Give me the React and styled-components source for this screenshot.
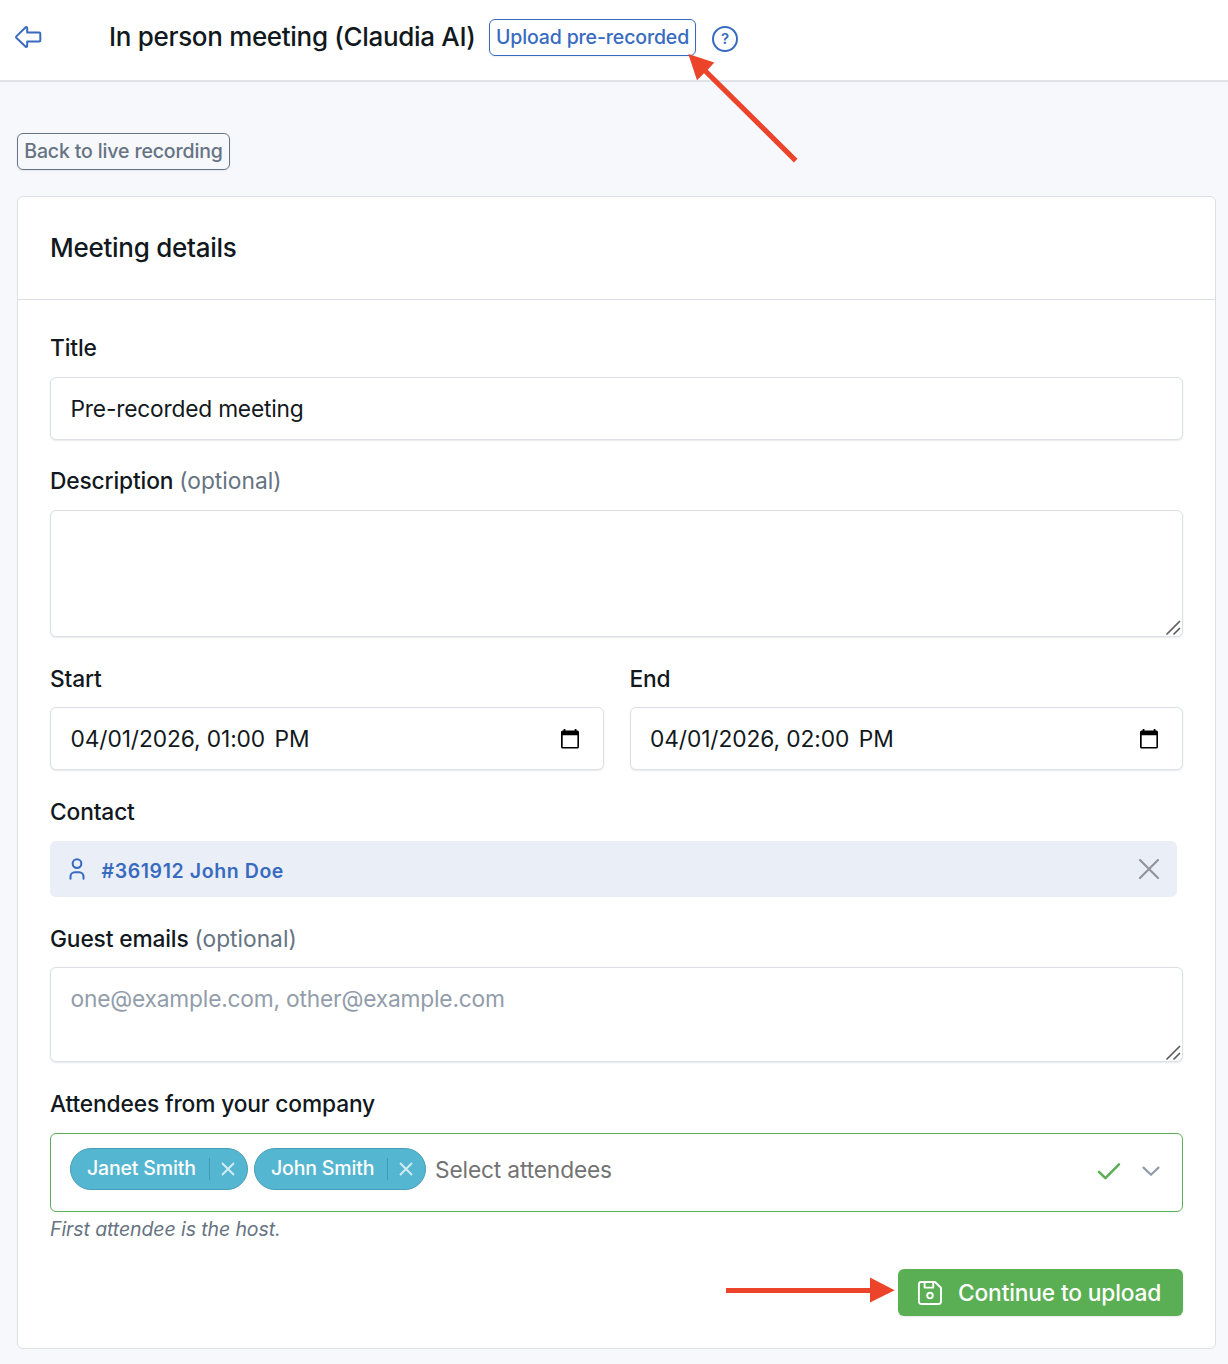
import React from 'react';
import styled, { createGlobalStyle } from 'styled-components';

const Icon = ({ size, stroke = 1.9, children }) => (
    <svg
        width={size}
        height={size}
        viewBox="0 0 24 24"
        fill="none"
        stroke="currentColor"
        strokeWidth={stroke}
        strokeLinecap="round"
        strokeLinejoin="round"
    >
        {children}
    </svg>
);

const ResizeGrip = () => (
    <Grip width="16" height="16" viewBox="0 0 16 16" stroke="#5c5c5c" strokeWidth="1.7" strokeLinecap="round">
        <path d="M2 15L14.500 2.500M9 15L14.500 9.500" />
    </Grip>
);

const CalendarIcon = () => (
    <svg width="18" height="20" viewBox="0 0 18 20" fill="#000">
        <path d="M16.4 1.6h-.9V0h-1.8v1.6H4.4V0H2.6v1.6h-.9C.7 1.6 0 2.4 0 3.4v14.4c0 1 .7 1.8 1.7 1.8h14.7c.9 0 1.6-.8 1.6-1.8V3.4c0-1-.7-1.8-1.6-1.8zm0 16.3H1.7V6.2h14.7z" />
    </svg>
);

const Field = ({ label, optional, gap, children }) => (
    <FieldBox>
        <Label $gap={gap}>
            {label} {optional && <Optional>(optional)</Optional>}
        </Label>
        {children}
    </FieldBox>
);

const DateField = ({ label, value, time }) => (
    <Field label={label} gap={12}>
        <Control $height={63}>
            <DateText>{value}</DateText>
            <DateText>{time}</DateText>
            <Spacer />
            <CalendarIcon />
        </Control>
    </Field>
);

const Attendee = ({ name, width }) => (
    <Tag $width={width}>
        <TagName>{name}</TagName>
        <TagRemove>
            <svg width="14" height="14" viewBox="0 0 14 14" stroke="currentColor" strokeWidth="1.9">
                <path d="M1 1l12 12M13 1L1 13" />
            </svg>
        </TagRemove>
    </Tag>
);

const App = () => {
    return (
        <Page>
            <GlobalStyle />
            <Header>
                <BackLink>
                    <svg width="28" height="24" viewBox="0 0 28 24" fill="none" stroke="currentColor" strokeWidth="2" strokeLinejoin="round" strokeLinecap="round">
                        <path d="M13.200 7.600h12.100a1 1 0 0 1 1 1v7a1 1 0 0 1-1 1H13.200v4.500a.9.9 0 0 1-1.500.6L2.300 12.800a1 1 0 0 1 0-1.400l9.400-9.100a.9.9 0 0 1 1.500.6z" />
                    </svg>
                </BackLink>
                <PageTitle>In person meeting (Claudia AI)</PageTitle>
                <SmallButton $color="#386bc0" $width={207}>Upload pre-recorded</SmallButton>
                <HelpIcon>?</HelpIcon>
            </Header>
            <Content>
                <SmallButton $color="#667382" $width={213}>Back to live recording</SmallButton>
                <Card>
                    <CardHeader>Meeting details</CardHeader>
                    <CardBody>
                        <Field label="Title">
                            <Control $height={63}>
                                <InputText>Pre-recorded meeting</InputText>
                            </Control>
                        </Field>
                        <Field label="Description" optional>
                            <Control $height={127}>
                                <ResizeGrip />
                            </Control>
                        </Field>
                        <DateRow>
                            <DateField label="Start" value="04/01/2026, 01:00" time="PM" />
                            <DateField label="End" value="04/01/2026, 02:00" time="PM" />
                        </DateRow>
                        <Field label="Contact">
                            <ContactBar>
                                <Icon size={26}>
                                    <circle cx="12" cy="7" r="4" />
                                    <path d="M6 21v-2a4 4 0 0 1 4-4h4a4 4 0 0 1 4 4v2" />
                                </Icon>
                                <ContactName>#361912 John Doe</ContactName>
                                <Spacer />
                                <ContactRemove>
                                    <svg width="20" height="20" viewBox="0 0 20 20" stroke="currentColor" strokeWidth="2.1" strokeLinecap="round">
                                        <path d="M1 1l18 18M19 1L1 19" />
                                    </svg>
                                </ContactRemove>
                            </ContactBar>
                        </Field>
                        <Field label="Guest emails" optional gap={12}>
                            <Control $height={95} $top>
                                <Placeholder>one@example.com, other@example.com</Placeholder>
                                <ResizeGrip />
                            </Control>
                        </Field>
                        <Field label="Attendees from your company">
                            <Select>
                                <Attendee name="Janet Smith" width={178} />
                                <Attendee name="John Smith" width={172} />
                                <SelectHint>Select attendees</SelectHint>
                                <Spacer />
                                <SelectIcons>
                                    <svg width="24" height="18" viewBox="0 0 24 18" fill="none" stroke="#5aae53" strokeWidth="2.5" strokeLinecap="round" strokeLinejoin="round">
                                        <path d="M2 9.8l6.4 6.3L22 2.300" />
                                    </svg>
                                    <svg width="18" height="10" viewBox="0 0 18 10" fill="none" stroke="#929dab" strokeWidth="2.2" strokeLinecap="round" strokeLinejoin="round">
                                        <path d="M1.5 1.600L9 8.800l7.5-7.2" />
                                    </svg>
                                </SelectIcons>
                            </Select>
                            <Hint>First attendee is the host.</Hint>
                        </Field>
                        <Actions>
                            <SubmitButton>
                                <svg width="26" height="26" viewBox="0 0 26 26" fill="none" stroke="currentColor" strokeWidth="1.9" strokeLinejoin="round">
                                    <path d="M4.300 2h13.700l6 5.800V21.600a2.400 2.400 0 0 1-2.400 2.400H4.300A2.400 2.400 0 0 1 1.900 21.600V4.400A2.400 2.400 0 0 1 4.300 2z" />
                                    <path d="M7.600 2v5.600h8.600V2" />
                                    <circle cx="13" cy="15.600" r="2.800" />
                                </svg>
                                <SubmitText>Continue to upload</SubmitText>
                            </SubmitButton>
                        </Actions>
                    </CardBody>
                </Card>
            </Content>
            <Pointers width="1228" height="1364" viewBox="0 0 1228 1364" fill="#ec432b">
                <path d="M688.300 54l26 8.500-6.600 7.200L797.500 158.800l-3.600 3.600L704 73.300l-7 7z" />
                <path d="M726 1288h144v-10.500l24.700 12.700-24.700 12.300v-9.500H726z" />
            </Pointers>
        </Page>
    );
};

const GlobalStyle = createGlobalStyle`
    *{
        box-sizing: border-box;
    }
    body{
        margin: 0;
        background: #f6f8fc;
    }
    svg{
        display: block;
        flex: none;
    }
`

const Page = styled.div`
    position: relative;
    width: 1228px;
    height: 1364px;
    overflow: hidden;
    background: #f6f8fc;
    color: #111820;
    font-family: Inter, "Liberation Sans", sans-serif;
    font-size: 22.75px;
    line-height: 32px;
    letter-spacing: -0.16px;
    white-space: nowrap;
`

const Header = styled.header`
    display: flex;
    height: 82px;
    padding-left: 14px;
    background: #fff;
    border-bottom: 2px solid #dfe2e7;
`

const BackLink = styled.div`
    width: 95px;
    padding-top: 25px;
    color: #386bc0;
`

const PageTitle = styled.div`
    width: 380px;
    padding-top: 21px;
    font-size: 26px;
    font-weight: 500;
    letter-spacing: -0.32px;
`

const SmallButton = styled.button`
    display: flex;
    align-items: center;
    justify-content: center;
    width: ${props => props.$width}px;
    height: 37px;
    margin: 0;
    padding: 0 0 2px;
    color: ${props => props.$color};
    background: transparent;
    border: 1px solid ${props => props.$color};
    border-radius: 6px;
    box-shadow: 0 1px 2px rgba(24, 36, 51, 0.08);
    font-family: inherit;
    font-size: 19.5px;
    font-weight: 500;
    line-height: 28px;
    letter-spacing: -0.14px;

    ${Header} &{
        margin-top: 19px;
    }
`

const HelpIcon = styled.div`
    display: flex;
    align-items: center;
    justify-content: center;
    width: 26px;
    height: 26px;
    margin: 26px 0 0 16px;
    color: #386bc0;
    border: 2px solid #386bc0;
    border-radius: 50%;
    font-size: 15px;
    font-weight: 600;
    line-height: 20px;
`

const Content = styled.main`
    padding: 51px 12px 0 17px;
`

const Card = styled.section`
    height: 1153px;
    margin-top: 26px;
    background: #fff;
    border: 1px solid #dce0e6;
    border-radius: 6px;
`

const CardHeader = styled.div`
    height: 103px;
    padding: 35px 32px 0;
    border-bottom: 1px solid #dce0e6;
    font-size: 26px;
    font-weight: 500;
    letter-spacing: -0.27px;
`

const CardBody = styled.div`
    display: flex;
    flex-direction: column;
    padding: 32px 32px 0;
`

const FieldBox = styled.div`
    flex: 1;
    margin-bottom: 26px;

    &:first-child{
        margin-bottom: 25px;
    }
`

const Label = styled.div`
    margin-bottom: ${props => props.$gap || 13}px;
    font-weight: 500;
    letter-spacing: -0.15px;
`

const Optional = styled.span`
    color: #667382;
    font-weight: 400;
    letter-spacing: 0;
`

const Control = styled.div`
    position: relative;
    display: flex;
    align-items: ${props => props.$top ? 'flex-start' : 'center'};
    height: ${props => props.$height}px;
    padding: ${props => props.$top ? '15px 20px 0 19.5px' : '0 24px 0 19.5px'};
    background: #fff;
    border: 1px solid #dce0e6;
    border-radius: 6px;
    box-shadow: 0 1px 2px rgba(24, 36, 51, 0.1);
`

const Grip = styled.svg`
    position: absolute;
    right: 1px;
    bottom: 1px;
`

const InputText = styled.span`
    letter-spacing: -0.2px;
`

const DateText = styled.span`
    letter-spacing: -0.1px;

    & + &{
        margin-left: 9.5px;
    }
`

const Spacer = styled.span`
    flex: 1;
`

const Placeholder = styled.span`
    color: #929dab;
    letter-spacing: -0.2px;
`

const DateRow = styled.div`
    display: flex;
    gap: 26px;

    ${FieldBox}{
        margin-bottom: 26px;
    }
`

const ContactBar = styled.div`
    display: flex;
    align-items: center;
    width: 1127px;
    height: 56px;
    padding: 0 18.5px 0 14px;
    color: #386bc0;
    background: #eaeef7;
    border-radius: 6px;
`

const ContactName = styled.span`
    margin: 4px 0 0 11.5px;
    font-size: 19.5px;
    font-weight: 600;
    letter-spacing: 0.6px;
`

const ContactRemove = styled.span`
    color: #8e939d;
`

const Select = styled.div`
    display: flex;
    gap: 6px;
    height: 79px;
    padding: 14px 22px 0 19px;
    border: 1px solid #5aae53;
    border-radius: 6px;
`

const Tag = styled.div`
    display: flex;
    align-items: center;
    width: ${props => props.$width}px;
    height: 42px;
    padding: 0 12.5px 0 16px;
    color: #fff;
    background: #54b6d0;
    border: 1px solid #479fb7;
    border-radius: 21px;
`

const TagName = styled.span`
    flex: 1;
    margin-bottom: 2px;
    font-size: 19.5px;
    font-weight: 500;
`

const TagRemove = styled.span`
    display: flex;
    align-items: center;
    height: 22px;
    padding-left: 10.5px;
    border-left: 1px solid #419bb3;
    color: #d4edf3;
`

const SelectHint = styled.span`
    padding: 6px 0 0 3px;
    color: #737373;
`

const SelectIcons = styled.div`
    display: flex;
    align-items: center;
    gap: 21px;
    height: 46px;
`

const Hint = styled.div`
    margin-top: 3px;
    height: 28px;
    color: #667382;
    font-size: 19.5px;
    font-style: italic;
    line-height: 28px;
    letter-spacing: -0.1px;
`

const Actions = styled.div`
    display: flex;
    justify-content: flex-end;
`

const SubmitButton = styled.button`
    display: flex;
    align-items: center;
    width: 285px;
    height: 47px;
    margin: 0;
    padding: 0 0 0 19px;
    color: #fff;
    background: #5aae53;
    border: 0;
    border-radius: 6px;
    box-shadow: 0 1px 2px rgba(24, 36, 51, 0.1);
    font-family: inherit;
    font-size: 22.75px;
    font-weight: 500;
    letter-spacing: -0.16px;
`

const SubmitText = styled.span`
    margin-left: 15px;
`

const Pointers = styled.svg`
    position: absolute;
    top: 0;
    left: 0;
    pointer-events: none;
`

export default App;
